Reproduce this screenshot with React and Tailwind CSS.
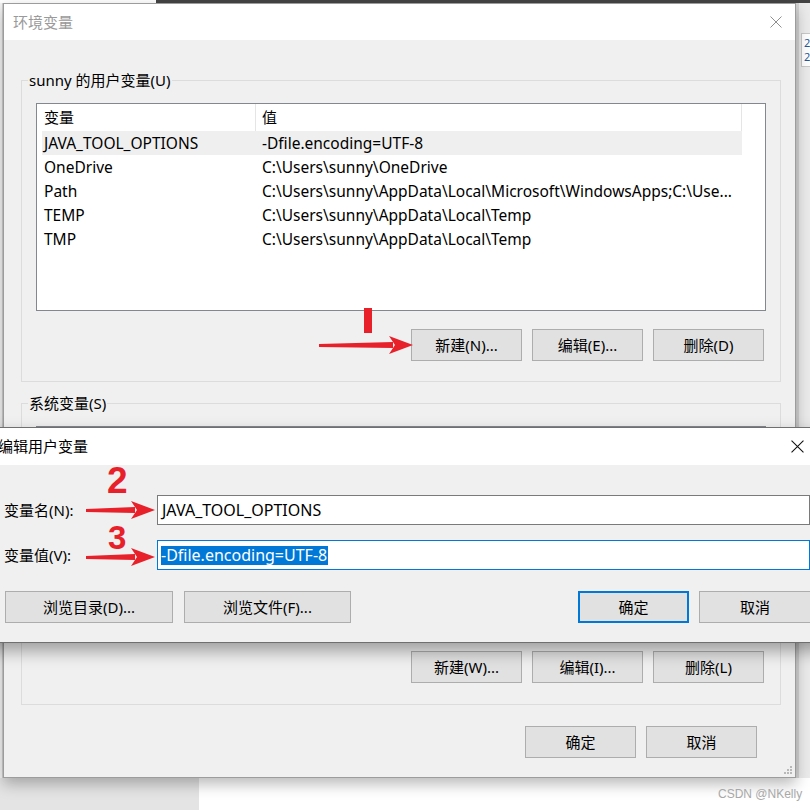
import React from 'react';

const userVars = [
    {name: 'JAVA_TOOL_OPTIONS', value: '-Dfile.encoding=UTF-8', selected: true},
    {name: 'OneDrive', value: 'C:\\Users\\sunny\\OneDrive'},
    {name: 'Path', value: 'C:\\Users\\sunny\\AppData\\Local\\Microsoft\\WindowsApps;C:\\Use...'},
    {name: 'TEMP', value: 'C:\\Users\\sunny\\AppData\\Local\\Temp'},
    {name: 'TMP', value: 'C:\\Users\\sunny\\AppData\\Local\\Temp'},
];

const WinButton = ({children, width, primary}) => (
    <div
        className={`h-[32px] flex items-center justify-center bg-[#e1e1e1] text-[15px] text-black ${primary ? 'border-2 border-[#0078d7]' : 'border border-[#adadad]'}`}
        style={{width}}
    >
        {children}
    </div>
);

const CloseX = ({color, size = 12}) => (
    <svg width={size} height={size} viewBox="0 0 12 12">
        <path d="M0.5 0.5 L11.5 11.5 M11.5 0.5 L0.5 11.5" stroke={color} strokeWidth="1" fill="none"/>
    </svg>
);

const GroupBox = ({label, children}) => (
    <div className="relative w-[760px] h-[302px] border border-[#dcdcdc] pl-[14px] pt-[22px]">
        <span className="absolute left-[6px] top-[-11px] px-[1px] bg-[#f0f0f0] text-[15px] leading-[20px] text-black">
            {label}
        </span>
        {children}
    </div>
);

const Arrow = ({x1, x2, y}) => (
    // hand-drawn style red arrow, head 23px long
    <svg className="absolute left-0 top-0 pointer-events-none" width="810" height="810">
        <polygon
            points={`${x1},${y - 1} ${x2 - 20},${y - 3} ${x2 - 20},${y + 3} ${x1},${y + 2}`}
            fill="#e8202a"
        />
        <polygon
            points={`${x2 - 24},${y - 9} ${x2},${y} ${x2 - 24},${y + 9} ${x2 - 18},${y}`}
            fill="#e8202a"
        />
    </svg>
);

export default function App() {
    return (
        <div className="relative w-[810px] h-[810px] overflow-hidden bg-white font-['Noto_Sans','Noto_Sans_CJK_SC',sans-serif]">
            {/* desktop bits behind the windows */}
            <div className="absolute top-0 left-[156px] right-0 h-[3px] bg-[#444444]"/>
            <div className="absolute top-[3px] left-0 w-[3px] h-[775px] bg-[#f4f4f4] border-r border-[#d0d0d0]"/>
            <div className="absolute top-[3px] left-[796px] right-0 h-[775px] bg-[#ebebeb] border-l-[3px] border-[#d4d4d4]">
                <div className="mt-[30px] ml-[2px] h-[34px] bg-white border-y border-l border-[#c8c8c8] text-[11px] leading-[14px] text-[#2b5797] pl-[2px] pt-[2px]">
                    2<br/>2
                </div>
            </div>
            <div className="absolute top-[778px] left-0 w-[199px] bottom-0 bg-[#e4e4e4]"/>

            {/* 环境变量 window */}
            <div className="absolute left-[3px] top-[3px] w-[793px] h-[775px] border border-[#9c9c9c] bg-[#f0f0f0] shadow-[0_6px_14px_rgba(0,0,0,0.28)] flex flex-col">
                <div className="h-[36px] bg-white flex items-center justify-between pl-[9px] pr-[13px]">
                    <span className="text-[15px] text-[#9a9a9a]">环境变量</span>
                    <CloseX color="#8f8f8f" size={12}/>
                </div>
                <div className="flex-1 flex flex-col pl-[17px] pt-[40px]">
                    <GroupBox label="sunny 的用户变量(U)">
                        <div className="w-[730px] h-[208px] border border-[#828790] bg-white text-[15.5px] text-black">
                            <div className="flex h-[27px] items-center text-[15px]">
                                <div className="w-[218px] pl-[7px]">变量</div>
                                <div className="w-[1px] h-full bg-[#e5e5e5]"/>
                                <div className="w-[486px] h-full flex items-center pl-[6px] border-r border-[#e5e5e5]">值</div>
                            </div>
                            {userVars.map(v => (
                                <div key={v.name}
                                     className={`ml-[5px] w-[700px] h-[24px] pt-[2px] flex items-center whitespace-nowrap ${v.selected ? 'bg-[#efefef]' : ''}`}>
                                    <div className="w-[220px] pl-[2px]">{v.name}</div>
                                    <div>{v.value}</div>
                                </div>
                            ))}
                        </div>
                        <div className="w-[730px] flex justify-end gap-[10px] pr-[2px] mt-[18px]">
                            <WinButton width={111}>新建(N)...</WinButton>
                            <WinButton width={111}>编辑(E)...</WinButton>
                            <WinButton width={111}>删除(D)</WinButton>
                        </div>
                    </GroupBox>

                    <div className="mt-[21px]">
                        <GroupBox label="系统变量(S)">
                            <div className="w-[730px] h-[207px] border border-[#828790] bg-white"/>
                            <div className="w-[730px] flex justify-end gap-[10px] pr-[2px] mt-[18px]">
                                <WinButton width={111}>新建(W)...</WinButton>
                                <WinButton width={111}>编辑(I)...</WinButton>
                                <WinButton width={111}>删除(L)</WinButton>
                            </div>
                        </GroupBox>
                    </div>

                    <div className="flex justify-end gap-[10px] pr-[38px] mt-[21px]">
                        <WinButton width={111}>确定</WinButton>
                        <WinButton width={111}>取消</WinButton>
                    </div>
                </div>
                <svg className="absolute right-[2px] bottom-[2px]" width="10" height="10" viewBox="0 0 10 10">
                    <rect x="7" y="1" width="2" height="2" fill="#b8b8b8"/>
                    <rect x="4" y="4" width="2" height="2" fill="#b8b8b8"/>
                    <rect x="7" y="4" width="2" height="2" fill="#b8b8b8"/>
                    <rect x="1" y="7" width="2" height="2" fill="#b8b8b8"/>
                    <rect x="4" y="7" width="2" height="2" fill="#b8b8b8"/>
                    <rect x="7" y="7" width="2" height="2" fill="#b8b8b8"/>
                </svg>
            </div>

            {/* 编辑用户变量 dialog */}
            <div className="absolute left-[-20px] top-[427px] w-[851px] h-[216px] border border-[#6f6f6f] bg-[#f0f0f0] shadow-[0_8px_16px_rgba(0,0,0,0.35)] flex flex-col">
                <div className="h-[37px] bg-white flex items-center justify-between pl-[17px] pr-[26px]">
                    <span className="text-[15px] text-black">编辑用户变量</span>
                    <CloseX color="#111111" size={13}/>
                </div>
                <div className="flex-1 flex flex-col pl-[23px] pt-[30px] text-[15px] text-black">
                    <div className="flex items-center">
                        <div className="w-[153px]">变量名(N):</div>
                        <div className="w-[653px] h-[30px] border border-[#7a7a7a] bg-white flex items-center pl-[4px] whitespace-nowrap text-[16px]">
                            JAVA_TOOL_OPTIONS
                        </div>
                    </div>
                    <div className="flex items-center mt-[15px]">
                        <div className="w-[153px]">变量值(V):</div>
                        <div className="w-[653px] h-[30px] border border-[#0078d7] bg-white flex items-center pl-[3px] whitespace-nowrap text-[16px]">
                            <span className="bg-[#0078d7] text-white leading-[19px] pr-[1px]">-Dfile.encoding=UTF-8</span>
                        </div>
                    </div>
                    <div className="flex mt-[21px] pl-[1px]">
                        <WinButton width={168}>浏览目录(D)...</WinButton>
                        <div className="w-[11px]"/>
                        <WinButton width={167}>浏览文件(F)...</WinButton>
                        <div className="w-[227px]"/>
                        <WinButton width={111} primary>确定</WinButton>
                        <div className="w-[10px]"/>
                        <WinButton width={112}>取消</WinButton>
                    </div>
                </div>
            </div>

            {/* red annotations */}
            <div className="absolute left-[364px] top-[308px] w-[8px] h-[25px] bg-[#e8202a]"/>
            <Arrow x1={319} x2={413} y={345}/>
            <span className="absolute left-[107px] top-[462px] text-[37px] leading-[37px] font-bold text-[#e8202a] font-['Liberation_Sans',sans-serif]">2</span>
            <Arrow x1={86} x2={155} y={510}/>
            <span className="absolute left-[108px] top-[521px] text-[33px] leading-[33px] font-bold text-[#e8202a] font-['Liberation_Sans',sans-serif]">3</span>
            <Arrow x1={86} x2={155} y={557}/>

            <span className="absolute left-[718px] top-[786px] text-[12px] leading-[16px] text-[#a8a8a8] font-['Liberation_Sans',sans-serif]">
                CSDN @NKelly
            </span>
        </div>
    );
}
